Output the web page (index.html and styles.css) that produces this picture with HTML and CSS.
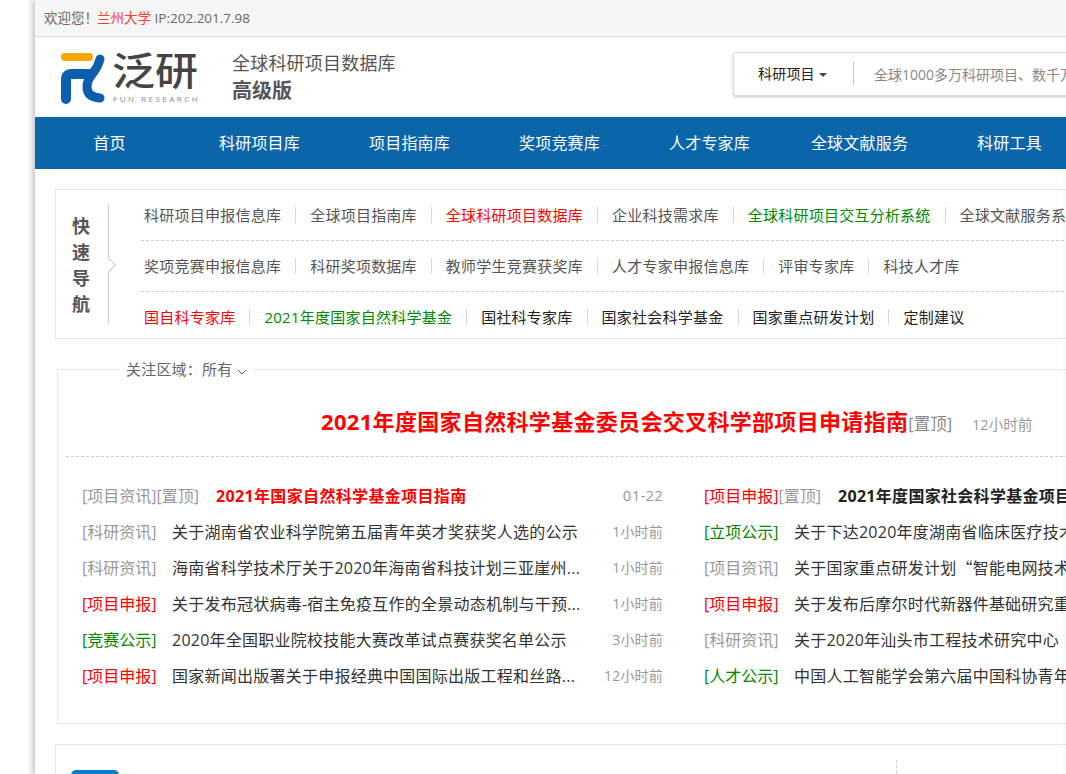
FILE: index.html
```html
<!DOCTYPE html>
<html lang="zh-CN">
<head>
<meta charset="utf-8">
<title>泛研</title>
<link rel="stylesheet" href="styles.css">
</head>
<body>
<div class="page">
  <div class="topbar">欢迎您<span class="punct">！</span><span class="red-soft">兰州大学</span> IP:202.201.7.98</div>
  <header class="header">
    <div class="logo">
      <svg class="logo-icon" width="46" height="52" viewBox="0 0 46 52">
        <path d="M5 5H29" stroke="#f7a600" stroke-width="8" stroke-linecap="round" fill="none"/>
        <path d="M6 47V27Q6 22 11 22H28" stroke="#0b5fae" stroke-width="10" stroke-linecap="round" fill="none"/>
        <path d="M40 7Q38 15 33 21Q27 28 27 35Q27 45 40 46" stroke="#0b5fae" stroke-width="9" stroke-linecap="round" fill="none"/>
      </svg>
      <div class="logo-text">
        <div class="logo-cn">泛研</div>
        <div class="logo-en">FUN RESEARCH</div>
      </div>
    </div>
    <div class="brand">
      <div class="brand-line">全球科研项目数据库</div>
      <div class="brand-strong">高级版</div>
    </div>
    <div class="search">
      <div class="search-type">科研项目<span class="caret"></span></div>
      <div class="search-input">全球1000多万科研项目、数千万</div>
    </div>
  </header>
  <nav class="nav">
    <a>首页</a><a>科研项目库</a><a>项目指南库</a><a>奖项竞赛库</a><a>人才专家库</a><a>全球文献服务</a><a>科研工具</a>
  </nav>
  <section class="quick">
    <div class="quick-title">快<br>速<br>导<br>航</div>
    <div class="quick-rows">
      <div class="quick-row">
        <a>科研项目申报信息库</a><a>全球项目指南库</a><a class="red">全球科研项目数据库</a><a>企业科技需求库</a><a class="green">全球科研项目交互分析系统</a><a>全球文献服务系统</a>
      </div>
      <div class="quick-row">
        <a>奖项竞赛申报信息库</a><a>科研奖项数据库</a><a>教师学生竞赛获奖库</a><a>人才专家申报信息库</a><a>评审专家库</a><a>科技人才库</a>
      </div>
      <div class="quick-row">
        <a class="red">国自科专家库</a><a class="green">2021年度国家自然科学基金</a><a class="dark">国社科专家库</a><a class="dark">国家社会科学基金</a><a class="dark">国家重点研发计划</a><a class="dark">定制建议</a>
      </div>
    </div>
  </section>
  <section class="news">
    <div class="news-filter">关注区域<span class="punct">：</span>所有 <svg class="chevron" width="10" height="6" viewBox="0 0 10 6"><path d="M1 1L5 5L9 1" fill="none" stroke="#666" stroke-width="1"/></svg></div>
    <div class="headline">
      <span class="headline-title">2021年度国家自然科学基金委员会交叉科学部项目申请指南</span><span class="headline-tag">[置顶]</span><span class="headline-time">12小时前</span>
    </div>
    <div class="news-grid">
      <div class="item"><span class="tag wide">[项目资讯][置顶]</span><span class="title hot">2021年国家自然科学基金项目指南</span><span class="time date">01-22</span></div>
      <div class="item"><span class="tag wide"><span class="red">[项目申报]</span>[置顶]</span><span class="title strong">2021年度国家社会科学基金项目申报公告</span></div>
      <div class="item"><span class="tag">[科研资讯]</span><span class="title">关于湖南省农业科学院第五届青年英才奖获奖人选的公示</span><span class="time">1小时前</span></div>
      <div class="item"><span class="tag green">[立项公示]</span><span class="title">关于下达2020年度湖南省临床医疗技术创新引导项目</span></div>
      <div class="item"><span class="tag">[科研资讯]</span><span class="title">海南省科学技术厅关于2020年海南省科技计划三亚崖州...</span><span class="time">1小时前</span></div>
      <div class="item"><span class="tag">[项目资讯]</span><span class="title">关于国家重点研发计划<span class="quote">“</span>智能电网技术与装备</span></div>
      <div class="item"><span class="tag red">[项目申报]</span><span class="title">关于发布冠状病毒-宿主免疫互作的全景动态机制与干预...</span><span class="time">1小时前</span></div>
      <div class="item"><span class="tag red">[项目申报]</span><span class="title">关于发布后摩尔时代新器件基础研究重大研究计划</span></div>
      <div class="item"><span class="tag green">[竞赛公示]</span><span class="title">2020年全国职业院校技能大赛改革试点赛获奖名单公示</span><span class="time">3小时前</span></div>
      <div class="item"><span class="tag">[科研资讯]</span><span class="title">关于2020年汕头市工程技术研究中心<span class="quote">（</span>重点实验室</span></div>
      <div class="item"><span class="tag red">[项目申报]</span><span class="title">国家新闻出版署关于申报经典中国国际出版工程和丝路...</span><span class="time">12小时前</span></div>
      <div class="item"><span class="tag green">[人才公示]</span><span class="title">中国人工智能学会第六届中国科协青年人才托举工程</span></div>
    </div>
  </section>
  <section class="lower">
    <div class="lower-badge"></div>
    <div class="lower-divider"></div>
  </section>
</div>
</body>
</html>
```
FILE: styles.css
```css
html, body { margin: 0; padding: 0; height: 774px; overflow: hidden; background: #fff; }
body { font-family: "Open Sans", "Noto Sans CJK SC", "Liberation Sans", sans-serif; color: #333; }
.punct { font-family: "Noto Sans CJK TC", sans-serif; }
.quote { font-family: "Noto Sans CJK SC", sans-serif; }
.page { width: 1200px; height: 774px; margin-left: 35px; box-shadow: -3px 0 6px rgba(0,0,0,.22); overflow: hidden; background: #fff; }
.page::after { content: ""; position: fixed; right: 0; top: 169px; bottom: 0; width: 6px; background: linear-gradient(to right, rgba(0,0,0,0), rgba(0,0,0,.025)); }
.topbar { height: 36px; line-height: 34px; padding-left: 9px; font-size: 13.500px; color: #666; background: #f6f6f6; border-bottom: 1px solid #ddd; white-space: nowrap; }
.topbar .punct { margin-right: -1px; }
.red-soft { color: #f5402c; }
.header { height: 80px; display: flex; align-items: flex-start; }
.logo { display: flex; margin: 15px 0 0 25px; width: 172px; }
.logo-icon { flex: none; }
.logo-text { margin-left: 6px; color: #444; }
.logo-cn { font-size: 43px; line-height: 41px; height: 42px; font-weight: 500; white-space: nowrap; transform: scaleY(.9); transform-origin: 0 0; }
.logo-en { font-size: 8px; line-height: 10px; letter-spacing: 2.500px; color: #888; white-space: nowrap; margin-left: 1px; }
.brand { color: #555; margin-top: 12px; width: 165px; flex: none; }
.brand-line { font-size: 18px; line-height: 28px; letter-spacing: .2px; white-space: nowrap; }
.brand-strong { font-size: 20px; line-height: 28px; font-weight: 700; }
.search { margin: 15px 0 0 336px; width: 500px; height: 44px; flex: none; display: flex; align-items: center; border: 1px solid #ddd; border-radius: 2px; box-shadow: 0 1px 3px rgba(0,0,0,.22); box-sizing: border-box; }
.search-type { width: 95px; margin-left: 24px; font-size: 14px; letter-spacing: .2px; color: #222; border-right: 1px solid #ccc; line-height: 24px; flex: none; white-space: nowrap; }
.caret { display: inline-block; margin-left: 4px; vertical-align: 2px; border: 4px solid transparent; border-top-color: #444; border-bottom: 0; }
.search-input { margin-left: 20px; font-size: 14px; color: #888; white-space: nowrap; }
.nav { height: 52px; display: flex; background: #0b65a9; }
.nav a { width: 150px; box-sizing: border-box; padding-right: 1px; flex: none; text-align: center; line-height: 52px; font-size: 16px; letter-spacing: .2px; color: #fff; }
.quick { margin: 20px 0 0 20px; width: 1160px; height: 150px; box-sizing: border-box; border: 1px solid #e8e8e8; display: flex; }
.quick-title { position: relative; width: 53px; margin: 15px 0; height: 118px; box-sizing: border-box; padding-top: 7px; padding-right: 2px; border-right: 1px solid #ccc; text-align: center; font-size: 18px; line-height: 26px; font-weight: 700; color: #555; flex: none; font-family: "Noto Sans CJK SC", sans-serif; }
.quick-title::after { content: ""; position: absolute; right: -6px; top: 55px; width: 9px; height: 9px; background: #fff; border-top: 1px solid #ccc; border-right: 1px solid #ccc; transform: rotate(45deg); }
.quick-rows { margin-left: 32px; flex: 1; }
.quick-row { height: 50px; display: flex; align-items: center; font-size: 15px; color: #555; white-space: nowrap; border-bottom: 1px dashed #ccc; padding-left: 3px; }
.quick-row:last-child { border-bottom: 0; }
.quick-row a { line-height: 16px; letter-spacing: .24px; padding-right: 14px; margin-right: 14px; border-right: 1px solid #d8d8d8; }
.quick-row a:last-child { border-right: 0; }
.red { color: #f00; }
.green { color: #080; }
.dark { color: #222; }
.news { position: relative; margin: 30px 0 0 22px; width: 1160px; height: 355px; box-sizing: border-box; border: 1px solid #e8e8e8; }
.news-filter { position: absolute; left: 62px; top: -11px; padding: 0 6px; background: #fff; font-size: 15px; letter-spacing: .2px; line-height: 20px; color: #666; white-space: nowrap; }
.chevron { margin-left: 0; }
.headline { height: 87px; margin: 0 8px; box-sizing: border-box; padding: 28px 0 0 255px; border-bottom: 1px dashed #ccc; white-space: nowrap; line-height: 46px; display: flex; align-items: baseline; }
.headline-title { font-size: 22px; font-weight: 700; letter-spacing: .32px; color: #f00; }
.headline-tag { font-size: 16.500px; color: #888; }
.headline-time { margin-left: 20px; font-size: 14.500px; color: #999; }
.news-grid { display: grid; grid-template-columns: 581px 581px; column-gap: 41px; grid-auto-rows: 36px; margin: 20px 0 0 24px; }
.item { display: flex; align-items: center; white-space: nowrap; font-size: 16px; overflow: hidden; }
.tag { width: 90px; color: #999; flex: none; }
.tag.wide { width: 134px; }
.tag.red { color: #f00; }
.tag.green { color: #080; }
.title { flex: 1; min-width: 0; color: #333; overflow: hidden; letter-spacing: .24px; }
.title.hot { color: #f00; font-weight: 700; letter-spacing: .35px; }
.title.strong { font-weight: 700; color: #222; letter-spacing: .3px; }
.time { flex: none; font-size: 14px; letter-spacing: .2px; color: #999; }
.date { font-size: 15px; }
.lower { position: relative; margin: 20px 0 0 20px; width: 1160px; height: 120px; box-sizing: border-box; border: 1px solid #e8e8e8; }
.lower-badge { position: absolute; left: 15px; top: 25px; width: 48px; height: 40px; background: #0b7cc6; border-radius: 5px; }
.lower-divider { position: absolute; left: 840px; top: 15px; height: 80px; border-left: 1px dashed #ccc; }
```
